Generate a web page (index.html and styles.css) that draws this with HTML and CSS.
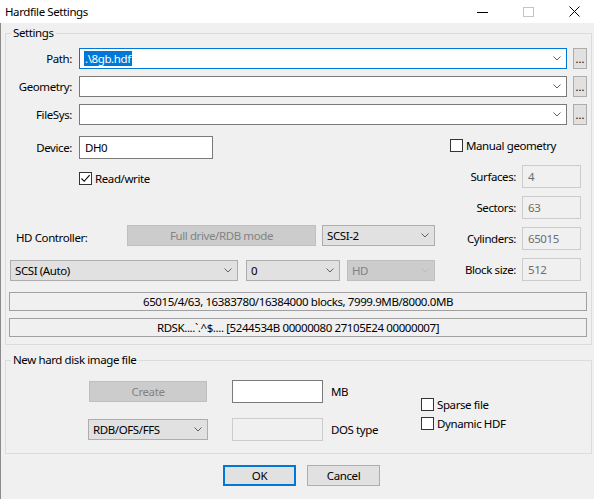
FILE: index.html
```html
<!DOCTYPE html>
<html lang="en">
<head>
  <meta charset="UTF-8">
  <title>Hardfile Settings</title>
  <link rel="stylesheet" href="styles.css">
</head>
<body>
  <div class="titlebar">
    <span class="title">Hardfile Settings</span>
    <div class="caption">
      <svg width="11" height="10" viewBox="0 0 11 10"><path d="M0 5.5H11" stroke="#000" stroke-width="1"/></svg>
      <svg width="11" height="10" viewBox="0 0 11 10"><rect x="0.5" y="0.5" width="10" height="9" fill="none" stroke="#c4c4c4"/></svg>
      <svg width="11" height="11" viewBox="0 0 11 11"><path d="M0.5 0.5L10.5 10.5M10.5 0.5L0.5 10.5" stroke="#000" stroke-width="1"/></svg>
    </div>
  </div>

  <div class="client">
    <fieldset class="group settings">
      <legend>Settings</legend>

      <div class="path-rows">
        <div class="row">
          <span class="lbl">Path:</span>
          <div class="combo focused">
            <span class="combo-text"><span class="selected">.\8gb.hdf</span></span>
            <svg class="chev" width="8" height="5" viewBox="0 0 8 5"><path d="M0.5 0.5L4 4L7.5 0.5" fill="none" stroke="#606060"/></svg>
          </div>
          <span class="dots">...</span>
        </div>
        <div class="row">
          <span class="lbl">Geometry:</span>
          <div class="combo">
            <span class="combo-text"></span>
            <svg class="chev" width="8" height="5" viewBox="0 0 8 5"><path d="M0.5 0.5L4 4L7.5 0.5" fill="none" stroke="#606060"/></svg>
          </div>
          <span class="dots">...</span>
        </div>
        <div class="row">
          <span class="lbl">FileSys:</span>
          <div class="combo">
            <span class="combo-text"></span>
            <svg class="chev" width="8" height="5" viewBox="0 0 8 5"><path d="M0.5 0.5L4 4L7.5 0.5" fill="none" stroke="#606060"/></svg>
          </div>
          <span class="dots">...</span>
        </div>
      </div>

      <div class="middle">
        <div class="left-col">
          <div class="device-row">
            <span class="lbl">Device:</span>
            <span class="edit device">DH0</span>
          </div>
          <div class="check-row rw">
            <span class="cb"><svg width="11" height="11" viewBox="0 0 11 11"><path d="M1.5 5.5L4.2 8.3L9.6 2.2" fill="none" stroke="#000" stroke-width="1.1"/></svg></span>
            <span>Read/write</span>
          </div>
          <div class="ctrl-row">
            <span class="ctrl-lbl">HD Controller:</span>
            <span class="btn disabled rdb">Full drive/RDB mode</span>
            <div class="drop scsi2">
              <span>SCSI-2</span>
              <svg class="chev" width="8" height="5" viewBox="0 0 8 5"><path d="M0.5 0.5L4 4L7.5 0.5" fill="none" stroke="#606060"/></svg>
            </div>
          </div>
          <div class="scsi-row">
            <div class="drop auto">
              <span>SCSI (Auto)</span>
              <svg class="chev" width="8" height="5" viewBox="0 0 8 5"><path d="M0.5 0.5L4 4L7.5 0.5" fill="none" stroke="#606060"/></svg>
            </div>
            <div class="drop unit">
              <span>0</span>
              <svg class="chev" width="8" height="5" viewBox="0 0 8 5"><path d="M0.5 0.5L4 4L7.5 0.5" fill="none" stroke="#606060"/></svg>
            </div>
            <div class="drop disabled hd">
              <span>HD</span>
              <svg class="chev" width="8" height="5" viewBox="0 0 8 5"><path d="M0.5 0.5L4 4L7.5 0.5" fill="none" stroke="#bcbcbc"/></svg>
            </div>
          </div>
        </div>

        <div class="right-col">
          <div class="check-row">
            <span class="cb"></span>
            <span>Manual geometry</span>
          </div>
          <div class="geo-rows">
            <div class="geo-row"><span class="geo-lbl">Surfaces:</span><span class="edit disabled">4</span></div>
            <div class="geo-row"><span class="geo-lbl">Sectors:</span><span class="edit disabled">63</span></div>
            <div class="geo-row"><span class="geo-lbl">Cylinders:</span><span class="edit disabled">65015</span></div>
            <div class="geo-row"><span class="geo-lbl">Block size:</span><span class="edit disabled">512</span></div>
          </div>
        </div>
      </div>

      <div class="info first">65015/4/63, 16383780/16384000 blocks, 7999.9MB/8000.0MB</div>
      <div class="info">RDSK....`.^$.... [5244534B 00000080 27105E24 00000007]</div>
    </fieldset>

    <fieldset class="group newimg">
      <legend>New hard disk image file</legend>
      <div class="new-grid">
        <span class="btn disabled create">Create</span>
        <span class="edit size"></span>
        <span class="unit-lbl">MB</span>
        <div class="new-checks">
          <div class="check-row"><span class="cb"></span><span>Sparse file</span></div>
          <div class="check-row"><span class="cb"></span><span>Dynamic HDF</span></div>
        </div>
        <div class="drop fstype">
          <span>RDB/OFS/FFS</span>
          <svg class="chev" width="8" height="5" viewBox="0 0 8 5"><path d="M0.5 0.5L4 4L7.5 0.5" fill="none" stroke="#606060"/></svg>
        </div>
        <span class="edit disabled dostype"></span>
        <span class="unit-lbl">DOS type</span>
      </div>
    </fieldset>

    <div class="buttons">
      <span class="btn default">OK</span>
      <span class="btn">Cancel</span>
    </div>
  </div>
</body>
</html>
```

FILE: styles.css
```css
* {
  box-sizing: border-box;
}

html, body {
  margin: 0;
  padding: 0;
}

body {
  width: 594px;
  height: 499px;
  overflow: hidden;
  background: #f0f0f0;
  font-family: "Noto Sans", "Open Sans", sans-serif;
  font-size: 11.5px;
  letter-spacing: -0.4px;
  color: #000;
}

/* window title */
.titlebar {
  height: 23px;
  background: #fff;
  display: flex;
  align-items: center;
  justify-content: space-between;
}

.title {
  padding-left: 5px;
  padding-bottom: 1px;
}

.caption {
  display: flex;
  align-items: center;
  gap: 35px;
  margin-right: 14px;
}

.caption svg {
  display: block;
}

.client {
  height: 476px;
  border-left: 1px solid #8a8a8a;
  padding: 3px 2px 0 4px;
}

/* group boxes */
.group {
  margin: 0;
  padding: 0;
  border: 1px solid #dcdcdc;
  width: 587px;
}

.group legend {
  margin-left: 5px;
  padding: 0 2px;
  line-height: 14px;
  height: 14px;
}

.settings {
  padding-bottom: 7px;
}

.newimg {
  margin-top: 8px;
  padding-bottom: 12px;
}

/* path / geometry / filesys */
.path-rows {
  padding-top: 8px;
  display: flex;
  flex-direction: column;
  gap: 7px;
}

.row {
  display: flex;
  align-items: center;
  height: 21px;
}

.lbl {
  width: 66px;
  margin-right: 7px;
  text-align: right;
}

.combo {
  width: 488px;
  height: 21px;
  background: #fff;
  border: 1px solid #7a7a7a;
  display: flex;
  align-items: center;
  justify-content: space-between;
  padding-left: 4px;
}

.combo.focused {
  border-color: #0078d7;
}

.selected {
  background: #0078d7;
  color: #fff;
  padding: 0 1px;
}

.chev {
  display: block;
  margin-right: 5px;
  flex: none;
}

.dots {
  width: 14px;
  height: 21px;
  margin-left: 6px;
  background: #e1e1e1;
  border: 1px solid #adadad;
  text-align: center;
  line-height: 20px;
  font-size: 11px;
  letter-spacing: 0;
}

/* middle part */
.middle {
  display: flex;
}

.left-col {
  width: 444px;
}

.right-col {
  width: 131px;
}

.device-row {
  margin-top: 11px;
  display: flex;
  align-items: center;
  height: 23px;
}

.edit {
  height: 23px;
  background: #fff;
  border: 1px solid #7a7a7a;
  padding-left: 5px;
  line-height: 21px;
}

.edit.device {
  width: 134px;
}

.edit.disabled {
  background: #f0f0f0;
  border-color: #cccccc;
  color: #6d6d6d;
}

.check-row {
  display: flex;
  align-items: center;
  gap: 3px;
  height: 13px;
  line-height: 13px;
}

.check-row.rw {
  margin-top: 13px;
  padding-left: 73px;
}

.right-col .check-row {
  margin-top: 14px;
}

.cb {
  width: 13px;
  height: 13px;
  flex: none;
  background: #fff;
  border: 1px solid #333;
}

.cb svg {
  display: block;
}

.ctrl-row {
  margin-top: 40px;
  display: flex;
  align-items: center;
  height: 21px;
}

.ctrl-lbl {
  width: 121px;
  padding-left: 10px;
  padding-top: 4px;
}

.btn {
  height: 21px;
  background: #e1e1e1;
  border: 1px solid #adadad;
  text-align: center;
  line-height: 19px;
}

.btn.disabled {
  background: #cccccc;
  border-color: #bfbfbf;
  color: #838383;
}

.btn.rdb {
  width: 189px;
}

.drop {
  height: 21px;
  background: #e1e1e1;
  border: 1px solid #adadad;
  display: flex;
  align-items: center;
  justify-content: space-between;
  padding-left: 4px;
}

.drop.disabled {
  background: #cccccc;
  border-color: #bfbfbf;
  color: #838383;
}

.drop.scsi2 {
  width: 113px;
  margin-left: 6px;
}

.scsi-row {
  margin-top: 14px;
  display: flex;
  height: 21px;
}

.drop.auto {
  width: 228px;
  margin-left: 4px;
}

.drop.unit {
  width: 94px;
  margin-left: 8px;
}

.drop.hd {
  width: 88px;
  margin-left: 7px;
}

.geo-rows {
  margin-top: 13px;
  display: flex;
  flex-direction: column;
  gap: 8px;
}

.geo-row {
  display: flex;
  align-items: center;
}

.geo-lbl {
  width: 66px;
  margin-right: 6px;
  text-align: right;
}

.geo-row .edit {
  width: 59px;
}

/* info lines */
.info {
  width: 578px;
  height: 19px;
  margin-left: 3px;
  margin-top: 7px;
  border: 1px solid #a0a0a0;
  text-align: center;
  line-height: 17px;
}

.info.first {
  margin-top: 11px;
}

/* new image */
.new-grid {
  display: grid;
  grid-template-columns: 120px 115px 98px auto;
  grid-template-rows: 23px 23px;
  row-gap: 15px;
  margin-left: 82px;
  padding-top: 13px;
  align-items: center;
}

.btn.create {
  width: 118px;
  margin-left: 1px;
}

.new-grid .edit {
  justify-self: start;
  margin-left: 24px;
  width: 91px;
}

.unit-lbl {
  padding-left: 8px;
}

.new-checks {
  grid-column: 4;
  grid-row: 1 / span 2;
  align-self: start;
  margin-top: 18px;
  display: flex;
  flex-direction: column;
  gap: 6px;
}

.drop.fstype {
  width: 120px;
}

/* dialog buttons */
.buttons {
  display: flex;
  gap: 11px;
  margin-top: 11px;
  margin-left: 218px;
}

.buttons .btn {
  width: 73px;
}

.btn.default {
  border-color: #0078d7;
  box-shadow: inset 0 0 0 1px #0078d7;
}
```
